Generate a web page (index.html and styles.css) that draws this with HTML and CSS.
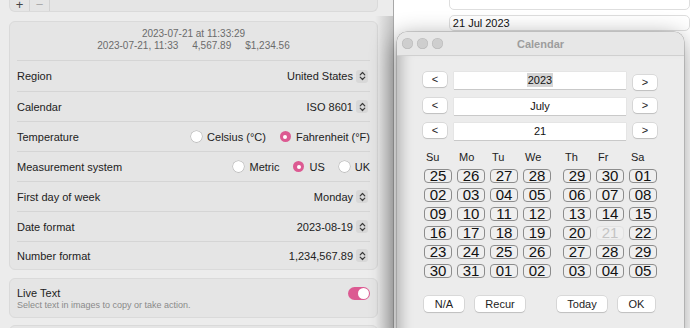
FILE: index.html
```html
<!DOCTYPE html>
<html lang="en">
<head>
    <meta charset="UTF-8">
    <meta name="viewport" content="width=device-width, initial-scale=1.0">
    <title>Calendar</title>
    <link rel="stylesheet" href="styles.css">
</head>
<body>
    <div class="desktop">
        <!-- window behind everything -->
        <div class="window back">
            <div class="form-row">
                <span class="form-label">Notes:</span>
                <div class="field"></div>
            </div>
            <div class="form-row">
                <span class="form-label">Date:</span>
                <div class="field">21 Jul 2023</div>
            </div>
        </div>

        <!-- settings window -->
        <div class="window settings">
            <div class="card toolbar">
                <span class="tool">+</span>
                <span class="tool off">&minus;</span>
            </div>

            <div class="card form">
                <div class="preview">
                    <div>2023-07-21 at 11:33:29</div>
                    <div class="preview-line">
                        <span>2023-07-21, 11:33</span>
                        <span>4,567.89</span>
                        <span>$1,234.56</span>
                    </div>
                </div>
                <div class="row first">
                    <span>Region</span>
                    <span class="popup">United States <span class="stepper"><svg width="7" height="10" viewBox="0 0 7 10"><path d="M1.2 3.8 L3.5 1.5 L5.8 3.8 M1.2 6.2 L3.5 8.5 L5.8 6.2"/></svg></span></span>
                </div>
                <div class="row">
                    <span>Calendar</span>
                    <span class="popup">ISO 8601 <span class="stepper"><svg width="7" height="10" viewBox="0 0 7 10"><path d="M1.2 3.8 L3.5 1.5 L5.8 3.8 M1.2 6.2 L3.5 8.5 L5.8 6.2"/></svg></span></span>
                </div>
                <div class="row">
                    <span>Temperature</span>
                    <span class="radios">
                        <span class="radio"><span class="dot"></span>Celsius (°C)</span>
                        <span class="radio"><span class="dot on"></span>Fahrenheit (°F)</span>
                    </span>
                </div>
                <div class="row">
                    <span>Measurement system</span>
                    <span class="radios">
                        <span class="radio"><span class="dot"></span>Metric</span>
                        <span class="radio"><span class="dot on"></span>US</span>
                        <span class="radio"><span class="dot"></span>UK</span>
                    </span>
                </div>
                <div class="row">
                    <span>First day of week</span>
                    <span class="popup">Monday <span class="stepper"><svg width="7" height="10" viewBox="0 0 7 10"><path d="M1.2 3.8 L3.5 1.5 L5.8 3.8 M1.2 6.2 L3.5 8.5 L5.8 6.2"/></svg></span></span>
                </div>
                <div class="row">
                    <span>Date format</span>
                    <span class="popup">2023-08-19 <span class="stepper"><svg width="7" height="10" viewBox="0 0 7 10"><path d="M1.2 3.8 L3.5 1.5 L5.8 3.8 M1.2 6.2 L3.5 8.5 L5.8 6.2"/></svg></span></span>
                </div>
                <div class="row last">
                    <span>Number format</span>
                    <span class="popup">1,234,567.89 <span class="stepper"><svg width="7" height="10" viewBox="0 0 7 10"><path d="M1.2 3.8 L3.5 1.5 L5.8 3.8 M1.2 6.2 L3.5 8.5 L5.8 6.2"/></svg></span></span>
                </div>
            </div>

            <div class="card live">
                <div>
                    <div class="live-title">Live Text</div>
                    <div class="live-sub">Select text in images to copy or take action.</div>
                </div>
                <span class="switch"></span>
            </div>

            <div class="card"></div>
        </div>

        <!-- calendar popup window -->
        <div class="window calendar">
            <div class="titlebar">
                <div class="lights">
                    <span></span><span></span><span></span>
                </div>
                <div class="title">Calendar</div>
                <div></div>
            </div>
            <div class="cal-body">
                <div class="nav-row">
                    <span class="nav-btn">&lt;</span>
                    <span class="nav-field"><span class="selected">2023</span></span>
                    <span class="nav-btn low">&gt;</span>
                </div>
                <div class="nav-row">
                    <span class="nav-btn">&lt;</span>
                    <span class="nav-field">July</span>
                    <span class="nav-btn">&gt;</span>
                </div>
                <div class="nav-row">
                    <span class="nav-btn">&lt;</span>
                    <span class="nav-field">21</span>
                    <span class="nav-btn">&gt;</span>
                </div>

                <div class="days">
                    <span class="wd">Su</span><span class="wd">Mo</span><span class="wd">Tu</span><span class="wd">We</span><span class="wd">Th</span><span class="wd">Fr</span><span class="wd">Sa</span>
                    <span class="day">25</span><span class="day">26</span><span class="day">27</span><span class="day">28</span><span class="day">29</span><span class="day">30</span><span class="day">01</span>
                    <span class="day">02</span><span class="day">03</span><span class="day">04</span><span class="day">05</span><span class="day">06</span><span class="day">07</span><span class="day">08</span>
                    <span class="day">09</span><span class="day">10</span><span class="day">11</span><span class="day">12</span><span class="day">13</span><span class="day">14</span><span class="day">15</span>
                    <span class="day">16</span><span class="day">17</span><span class="day">18</span><span class="day">19</span><span class="day">20</span><span class="day today">21</span><span class="day">22</span>
                    <span class="day">23</span><span class="day">24</span><span class="day">25</span><span class="day">26</span><span class="day">27</span><span class="day">28</span><span class="day">29</span>
                    <span class="day">30</span><span class="day">31</span><span class="day">01</span><span class="day">02</span><span class="day">03</span><span class="day">04</span><span class="day">05</span>
                </div>

                <div class="cal-actions">
                    <span class="act w40">N/A</span>
                    <span class="act w50">Recur</span>
                    <span class="act w50 push">Today</span>
                    <span class="act w37">OK</span>
                </div>
            </div>
        </div>
    </div>
</body>
</html>
```

FILE: styles.css
```css
body {
    margin: 0;
    background: #fff;
    font-family: "Liberation Sans", Arial, sans-serif;
    color: #222;
}

.desktop {
    position: relative;
    width: 690px;
    height: 328px;
    overflow: hidden;
}

.window {
    position: absolute;
    box-sizing: border-box;
}

/* back window */
.back {
    left: 330px;
    top: -6px;
    width: 360px;
    height: 340px;
    background: #fff;
    display: flex;
    flex-direction: column;
    gap: 5px;
}

.form-row {
    display: flex;
    align-items: center;
    gap: 62px;
}

.form-label {
    width: 71px;
    text-align: right;
    font-size: 11px;
}

.field {
    width: 300px;
    height: 16px;
    box-sizing: border-box;
    border: 1px solid #dedede;
    border-radius: 5px;
    padding-left: 3px;
    font-size: 11px;
    line-height: 14px;
    color: #111;
}

/* settings window */
.settings {
    left: 0;
    top: -9px;
    width: 394px;
    height: 345px;
    background: #ececec;
    border-right: 1px solid #a8a8a8;
    padding: 0 15px 0 9px;
}

/* shadow of the calendar falling on the settings window */
.settings::after {
    content: "";
    position: absolute;
    top: 25px;
    right: 0;
    bottom: 0;
    width: 18px;
    background: linear-gradient(to right, rgba(0, 0, 0, 0), rgba(0, 0, 0, 0.16));
}

.card {
    background: #e5e5e5;
    border: 1px solid #dadada;
    border-radius: 6px;
    box-sizing: border-box;
    margin-bottom: 8px;
    height: 40px;
}

.toolbar {
    height: 21px;
    margin-bottom: 9px;
    display: flex;
    align-items: flex-end;
    border-top: none;
    border-radius: 0 0 6px 6px;
}

.tool {
    width: 20px;
    height: 12px;
    box-sizing: border-box;
    border-right: 1px solid #d2d2d2;
    text-align: center;
    font-size: 13px;
    line-height: 11px;
    color: #444;
}

.tool.off {
    color: #ababab;
}

.form {
    height: 249px;
}

.preview {
    height: 38px;
    box-sizing: border-box;
    padding-top: 6px;
    text-align: center;
    font-size: 10px;
    line-height: 12px;
    color: #6b6b6b;
}

.preview-line {
    display: flex;
    justify-content: center;
    gap: 14px;
}

.row {
    display: flex;
    justify-content: space-between;
    align-items: center;
    margin: 0 7px;
    height: 30px;
    box-sizing: border-box;
    border-top: 1px solid #d5d5d5;
    font-size: 11px;
    color: #222;
}

.row.first {
    height: 31px;
}

.row.last {
    height: 28px;
}

.popup {
    display: flex;
    align-items: center;
    gap: 3px;
    margin-right: 2px;
}

.stepper {
    width: 12px;
    height: 13px;
    border-radius: 3px;
    background: #d8d8d8;
    display: flex;
    align-items: center;
    justify-content: center;
}

.stepper path {
    fill: none;
    stroke: #3a3a3a;
    stroke-width: 1.2;
    stroke-linecap: round;
    stroke-linejoin: round;
}

.radios {
    display: flex;
    gap: 14px;
}

.radio {
    display: flex;
    align-items: center;
    gap: 5px;
}

.dot {
    width: 11px;
    height: 11px;
    border-radius: 50%;
    background: #fff;
    box-shadow: 0 0 0 0.5px rgba(0, 0, 0, 0.22), 0 0.5px 1px rgba(0, 0, 0, 0.12);
    display: flex;
    align-items: center;
    justify-content: center;
}

.dot.on {
    background: #dc5a92;
    box-shadow: none;
}

.dot.on::after {
    content: "";
    width: 4px;
    height: 4px;
    border-radius: 50%;
    background: #fff;
}

.live {
    display: flex;
    justify-content: space-between;
    align-items: flex-start;
    padding: 8px 7px 0;
    margin-bottom: 7px;
}

.live-title {
    font-size: 11px;
    line-height: 13px;
}

.live-sub {
    font-size: 9px;
    line-height: 11px;
    color: #8a8a8a;
}

.switch {
    width: 22px;
    height: 13px;
    border-radius: 7px;
    background: #dc5a92;
    display: flex;
    justify-content: flex-end;
    align-items: center;
    padding: 1px;
    box-sizing: border-box;
}

.switch::after {
    content: "";
    width: 11px;
    height: 11px;
    border-radius: 50%;
    background: #fff;
}

/* calendar window */
.calendar {
    left: 397px;
    top: 32px;
    width: 287px;
    height: 310px;
    background: #ececec;
    border-radius: 10px 10px 0 0;
    overflow: hidden;
    box-shadow: 0 0 0 0.5px rgba(0, 0, 0, 0.28), -2px 6px 24px rgba(0, 0, 0, 0.45);
}

.titlebar {
    height: 24px;
    box-sizing: border-box;
    background: #e7e7e7;
    border-bottom: 1px solid #d0d0d0;
    display: grid;
    grid-template-columns: 1fr auto 1fr;
    align-items: center;
}

.lights {
    display: flex;
    gap: 4px;
    padding-left: 5px;
}

.lights span {
    width: 11px;
    height: 11px;
    border-radius: 50%;
    background: #cecece;
    box-shadow: inset 0 0 0 0.5px rgba(0, 0, 0, 0.12);
}

.title {
    font-size: 11px;
    font-weight: bold;
    color: #9d9d9d;
}

.cal-body {
    height: 290px;
    box-sizing: border-box;
    padding: 16px 0 0 26px;
    box-shadow: inset 14px 0 12px -9px rgba(0, 0, 0, 0.22);
}

.nav-row {
    display: flex;
    align-items: flex-start;
    gap: 7px;
    height: 16px;
    margin-bottom: 9.5px;
}

.nav-btn {
    width: 24px;
    height: 15px;
    background: #fff;
    border-radius: 4px;
    box-shadow: 0 0 0 0.5px rgba(0, 0, 0, 0.16), 0 1px 1px rgba(0, 0, 0, 0.12);
    text-align: center;
    font-size: 11px;
    line-height: 15px;
    color: #222;
}

.nav-btn.low {
    margin-top: 3px;
}

.nav-field {
    width: 172px;
    height: 17px;
    background: #fff;
    box-shadow: 0 1px 0 rgba(0, 0, 0, 0.12), 0 0 0 0.5px rgba(0, 0, 0, 0.06);
    text-align: center;
    font-size: 11px;
    line-height: 17px;
    color: #111;
}

.selected {
    background: #d5d5d5;
    padding: 1px 1px;
}

.days {
    display: grid;
    grid-template-columns: repeat(4, 28px) 2px repeat(3, 28px);
    grid-template-rows: 13px repeat(6, 14px);
    column-gap: 5px;
    row-gap: 5px;
    margin: 11.5px 0 0 1px;
}

.days > :nth-child(7n+5) {
    grid-column-start: 6;
}

.wd {
    font-size: 11px;
    line-height: 13px;
    padding-left: 2px;
    color: #222;
}

.day {
    box-sizing: border-box;
    border: 1px solid #8c8c8c;
    border-radius: 4px;
    background: #efefef;
    text-align: center;
    font-size: 15px;
    line-height: 12px;
    color: #111;
}

.day.today {
    border-color: #e2e2e2;
    color: #c4c4c4;
}

.cal-actions {
    display: flex;
    gap: 11px;
    margin: 18px 0 0 1px;
}

.act {
    height: 16px;
    background: #fff;
    border-radius: 4px;
    box-shadow: 0 0 0 0.5px rgba(0, 0, 0, 0.16), 0 1px 1px rgba(0, 0, 0, 0.12);
    text-align: center;
    font-size: 11px;
    line-height: 16px;
    color: #222;
}

.w40 { width: 40px; }
.w50 { width: 50px; }
.w37 { width: 37px; }

.push {
    margin-left: 21px;
}
```
